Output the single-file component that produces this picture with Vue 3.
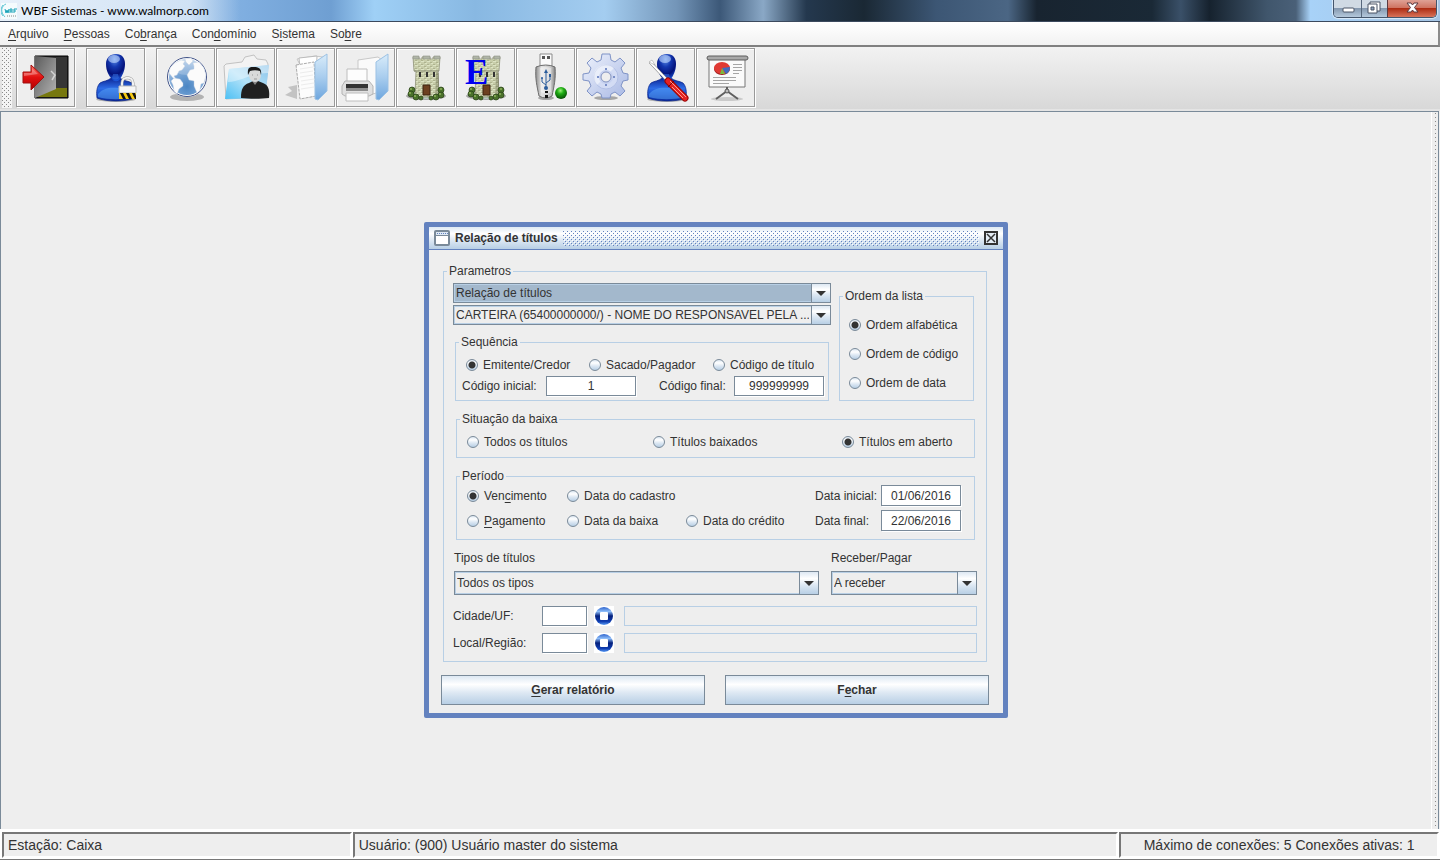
<script setup>
	import { ref } from "vue";

	const menus = [
		["", "A", "rquivo"],
		["", "P", "essoas"],
		["Co", "b", "rança"],
		["Con", "d", "omínio"],
		["S", "i", "stema"],
		["So", "b", "re"],
	];

	const report = ref("Relação de títulos");
	const wallet = ref("CARTEIRA (65400000000/) - NOME DO RESPONSAVEL PELA ...");
	const titleType = ref("Todos os tipos");
	const direction = ref("A receber");

	const orderOptions = ["Ordem alfabética", "Ordem de código", "Ordem de data"];
	const sequenceOptions = [
		"Emitente/Credor",
		"Sacado/Pagador",
		"Código de título",
	];
	const statusOptions = [
		"Todos os títulos",
		"Títulos baixados",
		"Títulos em aberto",
	];

	const order = ref("Ordem alfabética");
	const sequence = ref("Emitente/Credor");
	const status = ref("Títulos em aberto");
	const period = ref("vencimento");

	const firstCode = ref("1");
	const lastCode = ref("999999999");
	const startDate = ref("01/06/2016");
	const endDate = ref("22/06/2016");

	const lookups = ref([
		{ id: "cidade", label: "Cidade/UF:", code: "", name: "" },
		{ id: "local", label: "Local/Região:", code: "", name: "" },
	]);
</script>

<template>
	<div class="app-window">
		<svg class="defs" width="0" height="0" aria-hidden="true">
			<defs>
				<radialGradient id="blueHead" cx="0.45" cy="0.2" r="0.8">
					<stop offset="0" stop-color="#5f8fe8" />
					<stop offset="0.35" stop-color="#1438b0" />
					<stop offset="0.7" stop-color="#04127a" />
					<stop offset="1" stop-color="#1d5be0" />
				</radialGradient>
				<linearGradient id="blueBody" x1="0" y1="0" x2="0" y2="1">
					<stop offset="0" stop-color="#0b2596" />
					<stop offset="0.45" stop-color="#2d6ce6" />
					<stop offset="0.7" stop-color="#1c50cc" />
					<stop offset="1" stop-color="#0a2a9a" />
				</linearGradient>
				<linearGradient id="cover" x1="0" y1="0" x2="0" y2="1">
					<stop offset="0" stop-color="#d9ecfa" />
					<stop offset="0.5" stop-color="#a9cdee" />
					<stop offset="1" stop-color="#6ea6de" />
				</linearGradient>
				<linearGradient id="leaf" x1="0" y1="0" x2="1" y2="1">
					<stop offset="0" stop-color="#5c5c5c" />
					<stop offset="1" stop-color="#b4b4b4" />
				</linearGradient>
				<linearGradient id="redArrow" x1="0" y1="0" x2="0" y2="1">
					<stop offset="0" stop-color="#ff6a5c" />
					<stop offset="0.5" stop-color="#e01010" />
					<stop offset="1" stop-color="#b00000" />
				</linearGradient>
				<radialGradient id="sea" cx="0.5" cy="0.75" r="0.8">
					<stop offset="0" stop-color="#4a86c4" />
					<stop offset="0.6" stop-color="#86aeda" />
					<stop offset="1" stop-color="#c4d8ee" />
				</radialGradient>
				<linearGradient id="photoFolder" x1="0" y1="1" x2="1" y2="0">
					<stop offset="0" stop-color="#4cc0f4" />
					<stop offset="0.5" stop-color="#b4e2f8" />
					<stop offset="1" stop-color="#8cc4ea" />
				</linearGradient>
				<linearGradient id="metal" x1="0" y1="0" x2="1" y2="0">
					<stop offset="0" stop-color="#8e8e8e" />
					<stop offset="0.3" stop-color="#e4e4e4" />
					<stop offset="0.8" stop-color="#c4c4c4" />
					<stop offset="1" stop-color="#808080" />
				</linearGradient>
				<radialGradient id="greenBall" cx="0.45" cy="0.3" r="0.7">
					<stop offset="0" stop-color="#9cf078" />
					<stop offset="0.4" stop-color="#1fae14" />
					<stop offset="1" stop-color="#064c04" />
				</radialGradient>
				<linearGradient id="gearFill" x1="0" y1="0" x2="1" y2="1">
					<stop offset="0" stop-color="#eef2fc" />
					<stop offset="1" stop-color="#a8b8e4" />
				</linearGradient>
				<linearGradient id="lookupBall" x1="0" y1="0" x2="0" y2="1">
					<stop offset="0" stop-color="#2c62cc" />
					<stop offset="0.25" stop-color="#8cbcf8" />
					<stop offset="0.5" stop-color="#04207c" />
					<stop offset="0.8" stop-color="#0e3cb0" />
					<stop offset="1" stop-color="#5a9cf4" />
				</linearGradient>
				<pattern id="stone" width="6" height="4" patternUnits="userSpaceOnUse">
					<rect width="6" height="4" fill="#c8cdaa" />
					<path d="M0 .5h3M4 2.5h2" stroke="#dde4c4" />
					<path d="M3 1.5h2M0 3.5h2" stroke="#aeb38f" />
				</pattern>
				<symbol id="user" viewBox="0 0 57 57">
					<ellipse cx="30" cy="50" rx="20" ry="3" fill="#000" opacity=".25" />
					<path
						d="M11 49c-1-6 0-12 3-15 3-2 8-2 11-5h9c3 3 9 3 12 5 3 3 4 9 3 15-9 4-29 4-38 0z"
						fill="url(#blueBody)"
						stroke="#0a2488"
						stroke-width=".7"
					/>
					<path
						d="M12 45c5-6 12-7 20-6s10 2 16 5v4c-11 3-26 3-36 0z"
						fill="#55a0f4"
						opacity=".55"
					/>
					<path
						d="M30 5c6 0 9 4 9 10 0 7-3 12-5 15-2 3-6 3-8 0-3-3-6-8-6-15 0-6 4-10 10-10z"
						fill="url(#blueHead)"
					/>
					<path
						d="M26 29c2 2 5 2 7 0l-1-4h-5z"
						fill="#3b7cf0"
						opacity=".5"
					/>
					<ellipse cx="28" cy="10" rx="6" ry="4" fill="#c4dcff" opacity=".6" />
				</symbol>
				<symbol id="castle" viewBox="0 0 57 57">
					<ellipse cx="29" cy="47" rx="20" ry="4" fill="#000" opacity=".3" />
					<ellipse cx="29" cy="46" rx="14" ry="4" fill="#b9c9c2" />
					<path
						d="M16 8h6v2h3V8h8v2h3V8h7l-1 14h-1l1 24-6 2H22l-4-2 1-24h-2z"
						fill="url(#stone)"
						stroke="#8f9279"
						stroke-width=".8"
					/>
					<path
						d="M16 7h6v3h-6zM26 7h7v3h-7zM37 7h6v3h-6z"
						fill="#b0b5a8"
						stroke="#8d9185"
						stroke-width=".6"
					/>
					<path d="M17 22h25" stroke="#8c9078" />
					<path d="M39 23l3 1v21l-4 2z" fill="#55583c" opacity=".3" />
					<path d="M22 23h2v5h-2zM29 23h2v5h-2zM36 23h2v5h-2z" fill="#333" />
					<path d="M26 46V36h7v10z" fill="#6d4020" stroke="#3c2410" />
					<g fill="#4b722b" stroke="#263f14" stroke-width=".7">
						<circle cx="15" cy="41" r="3" />
						<circle cx="14" cy="45" r="3" />
						<circle cx="19" cy="48" r="3" />
						<circle cx="24" cy="49" r="2" />
						<circle cx="44" cy="41" r="3" />
						<circle cx="44" cy="46" r="3" />
						<circle cx="39" cy="48" r="3" />
						<circle cx="34" cy="49" r="2" />
					</g>
					<g fill="#8fb55c">
						<circle cx="14" cy="40" r="1" />
						<circle cx="13" cy="44" r="1" />
						<circle cx="18" cy="47" r="1" />
						<circle cx="44" cy="40" r="1" />
						<circle cx="43" cy="45" r="1" />
						<circle cx="38" cy="47" r="1" />
					</g>
				</symbol>
			</defs>
		</svg>

		<header class="titlebar">
			<svg class="app-icon" viewBox="0 0 16 16" aria-hidden="true">
				<rect width="16" height="16" fill="#f4fbfd" />
				<path
					d="M5 1C0 3-1 9 4 14M2 2C-1 6 0 11 2 13"
					fill="none"
					stroke="#5fc6d4"
				/>
				<path
					d="M4 6l1 4 1-3 1 3 1-4M9 10V6h2v2H9M11 8v2M13 10V6h3M13 8h2"
					fill="none"
					stroke="#17a2b8"
				/>
				<path d="M6 13h9" stroke="#888" stroke-dasharray="1 1" />
			</svg>
			<h1>WBF Sistemas - www.walmorp.com</h1>
			<div class="window-controls">
				<button class="control-min" type="button" aria-label="Minimizar">
					<svg viewBox="0 0 28 17">
						<rect
							x="9"
							y="8"
							width="11"
							height="4"
							rx="1"
							fill="#fff"
							stroke="#4b5566"
						/>
					</svg>
				</button>
				<button class="control-restore" type="button" aria-label="Restaurar">
					<svg viewBox="0 0 26 17">
						<path d="M8 2h10v9H8z" fill="#fff" stroke="#4b5566" />
						<path d="M6 4h9v9H6z" fill="#fff" stroke="#4b5566" />
						<path d="M9 7h3v3H9z" fill="#8ea2ba" stroke="#4b5566" />
					</svg>
				</button>
				<button class="control-close" type="button" aria-label="Fechar janela">
					<svg viewBox="0 0 47 17">
						<path
							d="M19 3h4l1.500 2L26 3h4l-3.500 4.500L30 12h-4l-1.500-2L23 12h-4l3.500-4.500z"
							fill="#fff"
							stroke="#5c3a40"
						/>
					</svg>
				</button>
			</div>
		</header>

		<nav class="menubar">
			<button v-for="menu in menus" :key="menu.join('')" type="button">
				{{ menu[0] }}<u>{{ menu[1] }}</u
				>{{ menu[2] }}
			</button>
		</nav>

		<div class="toolbar">
			<span class="grip"></span>
			<button class="tool spaced" type="button" aria-label="Sair">
				<svg viewBox="0 0 57 57">
					<path d="M18 7h33v42H18z" fill="#292929" stroke="#000" />
					<path d="M19 48l20-9h11v9z" fill="#77780f" />
					<path d="M39 8h11v31H39z" fill="#363636" />
					<path d="M18 7l21 2v31l-21 9z" fill="url(#leaf)" />
					<path
						d="M34 22l4 4-3 5"
						fill="none"
						stroke="#d4d4d4"
						stroke-width="1.500"
					/>
					<path
						d="M6 23h8v-7l13 12-13 13v-7H6z"
						fill="url(#redArrow)"
						stroke="#a01010"
					/>
					<path d="M7 24h8v-5l6 6-14 2z" fill="#fff" opacity=".3" />
				</svg>
			</button>
			<button class="tool spaced" type="button" aria-label="Bloquear usuário">
				<svg viewBox="0 0 57 57">
					<use href="#user" x="-1" />
					<path
						d="M35 38v-4c0-7 11-7 11 0v4"
						fill="none"
						stroke="#999"
						stroke-width="3"
					/>
					<path
						d="M35 38v-4c0-7 11-7 11 0v4"
						fill="none"
						stroke="#f2f2f2"
						stroke-width="2"
					/>
					<path d="M32 37h17v7H32z" fill="#f6f6f6" stroke="#bbb" />
					<path d="M32 44h17v6H32z" fill="#f6c915" />
					<path
						d="M33 44h3l3 6h-3zM39 44h3l3 6h-3zM45 44h3l1 3v3h-1z"
						fill="#111"
					/>
				</svg>
			</button>
			<button class="tool" type="button" aria-label="Internet">
				<svg viewBox="0 0 57 57">
					<ellipse cx="30" cy="48" rx="17" ry="4" fill="#000" opacity=".25" />
					<circle
						cx="30"
						cy="28"
						r="19"
						fill="url(#sea)"
						stroke="#fff"
						stroke-width="2"
					/>
					<circle cx="30" cy="28" r="19.500" fill="none" stroke="#3f5186" />
					<g fill="#fbfbfb" stroke="#b8c8dc" stroke-width=".4">
						<path
							d="M13 19l5-5 6-3 4 1-2 3 2 2-3 4-3 1-2 4-3 1 2 3-3-1-4-5z"
						/>
						<path d="M17 29l6 1 3 4 0 3-4 3-2 5-3-3-1-6-2-4z" />
						<path d="M28 10l6-1 2 3-4 4-3-3z" />
						<path
							d="M36 14l6-1 5 6 2 7-2 8-3 1-1 6-3 3-3-7 0-5-5-1-2-5 3-5 4-1 0-3z"
						/>
					</g>
					<ellipse cx="30" cy="18" rx="14" ry="8" fill="#fff" opacity=".2" />
				</svg>
			</button>
			<button class="tool" type="button" aria-label="Cadastro de pessoas">
				<svg viewBox="0 0 57 57">
					<path
						d="M7 17l2-2 16-2 3-5 9-2 3 4 9 1 2 4-3 33-39 2z"
						fill="#f3f3f3"
						stroke="#c2c2c2"
					/>
					<path d="M12 20l40-4-4 33-40 1z" fill="url(#photoFolder)" />
					<path d="M12 20l40-4-1 8c-17 0-26 8-40 9z" fill="#fff" opacity=".4" />
					<path
						d="M24 49c0-9 2-13 8-15l4-2h5l5 2c5 2 7 6 6 15-8 1-20 1-28 0z"
						fill="#202020"
					/>
					<path d="M35 32l3 4 3-4z" fill="#888" />
					<ellipse cx="38" cy="26" rx="6" ry="7" fill="#d9d9d9" />
					<path
						d="M31 26c-1-9 3-8 6-8 5 0 8 2 7 8l-1-4c-3-1-7-1-10 0z"
						fill="#191919"
					/>
					<path d="M35 26h1M40 26h1M37 30h3" stroke="#999" />
				</svg>
			</button>
			<button class="tool" type="button" aria-label="Documentos">
				<svg viewBox="0 0 57 57">
					<path d="M20 50L8 46l7-4-4-4 9-2z" fill="#8d8d8d" opacity=".45" />
					<path d="M20 10l18-3 8 1v34l-7 4z" fill="#f8f8f8" stroke="#c8c8c8" />
					<path d="M22 9l18-2-2 40-12 2z" fill="#fff" stroke="#bbb" />
					<path
						d="M19 16l18-3 2 34-16 3z"
						fill="#fcfcfc"
						stroke="#ababab"
						stroke-dasharray="3 1"
					/>
					<path
						d="M23 20l13-2M23 24l13-2M23 28l13-2M24 32l13-2M24 36l13-2M24 40l13-2"
						stroke="#ececec"
					/>
					<path d="M38 13l12-8v37l-9 9-3-1z" fill="url(#cover)" stroke="#9bc1e4" />
				</svg>
			</button>
			<button class="tool" type="button" aria-label="Imprimir">
				<svg viewBox="0 0 57 57">
					<path d="M21 11l20-3 4 3v31l-15 5-9-3z" fill="#fafafa" stroke="#c8c8c8" />
					<path d="M39 13l12-8v37l-9 9-3-1z" fill="url(#cover)" stroke="#9bc1e4" />
					<path d="M10 20h20v13H10z" fill="#fdfdfd" stroke="#bebebe" />
					<path
						d="M8 32h24l4 5v8l-4 2H8l-3-2v-8z"
						fill="#e0e0e0"
						stroke="#b4b4b4"
					/>
					<path d="M9 35h22v7H9z" fill="#333" />
					<path d="M9 39h22v3H9z" fill="#8d8d8d" />
					<path d="M9 44h22v8H9z" fill="#fdfdfd" stroke="#bebebe" />
				</svg>
			</button>
			<button class="tool" type="button" aria-label="Condomínio">
				<svg viewBox="0 0 57 57"><use href="#castle" /></svg>
			</button>
			<button class="tool" type="button" aria-label="Empresa">
				<svg viewBox="0 0 57 57">
					<use href="#castle" />
					<text class="tool-letter" x="8" y="35">E</text>
				</svg>
			</button>
			<button class="tool" type="button" aria-label="Dispositivo USB">
				<svg viewBox="0 0 57 57">
					<ellipse cx="29" cy="49" rx="8" ry="2" fill="#000" opacity=".3" />
					<path d="M23 5h12v12H23z" fill="#fafafa" stroke="#8b8b8b" />
					<path d="M25 7h3v3h-3zM30 7h3v3h-3z" fill="#555" />
					<path
						d="M19 18q10-4 19 0c1 12-1 19-3 29q-6 4-13 0c-2-10-4-17-3-29z"
						fill="url(#metal)"
						stroke="#6d6d6d"
					/>
					<path d="M23 19q5-2 11 0v24q-5 3-10 0z" fill="#fff" opacity=".4" />
					<path
						d="M29 40V23M29 36l-4-3v-4M29 34l4-3v-4"
						fill="none"
						stroke="#2b5d9c"
					/>
					<path d="M29 20l2 4h-4zM32 25h2v3h-2z" fill="#2b5d9c" />
					<circle cx="25" cy="29" r="1" fill="#2b5d9c" />
					<circle cx="29" cy="39" r="2" fill="#2b5d9c" />
					<path d="M28 42h3v2h-3zM28 46h3v3h-3z" fill="#111" />
					<circle cx="44" cy="44" r="6" fill="url(#greenBall)" />
				</svg>
			</button>
			<button class="tool" type="button" aria-label="Configurações">
				<svg viewBox="0 0 57 57">
					<ellipse cx="29" cy="49" rx="12" ry="2" fill="#000" opacity=".3" />
					<path
						d="M25 5h8l1 6 4 2 5-4 5 5-4 5 2 5 5 1v6l-5 1-2 5 4 5-5 5-5-4-4 2-1 4h-8l-1-4-4-2-5 4-5-5 4-5-2-5-6-1v-6l6-1 2-5-4-5 5-5 5 4 4-2z"
						fill="url(#gearFill)"
						stroke="#7f93c6"
					/>
					<circle cx="29" cy="28" r="12" fill="#d3dcf4" stroke="#b2c0e6" />
					<path d="M20 36A12 12 0 0 1 37 19z" fill="#fff" opacity=".5" />
					<circle cx="29" cy="28" r="7" fill="#c6d1f0" />
					<circle cx="29" cy="28" r="5" fill="#eee" stroke="#8494bf" />
					<path
						d="M28 19h2v2h-2zM28 35h2v2h-2zM20 27h2v2h-2zM36 27h2v2h-2z"
						fill="#7b90c8"
					/>
				</svg>
			</button>
			<button class="tool" type="button" aria-label="Ferramentas do usuário">
				<svg viewBox="0 0 57 57">
					<use href="#user" />
					<path d="M13 13l17 18" stroke="#777" stroke-width="3" />
					<path d="M13 13l17 18" stroke="#fff" stroke-width="2" />
					<path d="M12 13l3-2 3 5z" fill="#fff" stroke="#999" stroke-width=".5" />
					<path
						d="M31 32l17 17"
						stroke="#9c0606"
						stroke-width="7"
						stroke-linecap="round"
					/>
					<path
						d="M31 32l17 17"
						stroke="#e62222"
						stroke-width="5"
						stroke-linecap="round"
					/>
					<path d="M33 32l16 16M35 38l11 11" stroke="#ff9a90" />
					<path d="M31 38l6-6" stroke="#7c0000" />
				</svg>
			</button>
			<button class="tool" type="button" aria-label="Relatórios">
				<svg viewBox="0 0 57 57">
					<ellipse cx="30" cy="50" rx="16" ry="2" fill="#000" opacity=".15" />
					<path d="M12 10h36v28H12z" fill="#fafafa" stroke="#777" />
					<rect
						x="10"
						y="7"
						width="41"
						height="4"
						rx="2"
						fill="#a8a8a8"
						stroke="#5c5c5c"
					/>
					<ellipse cx="25" cy="20" rx="8" ry="6" fill="#9c1c1c" />
					<ellipse cx="25" cy="19" rx="8" ry="6" fill="#e03a34" />
					<path d="M25 19l8-1c0 4-2 6-4 7z" fill="#3e6cc0" />
					<path d="M25 19l3 6-5 0z" fill="#7cb83c" />
					<path
						d="M36 15.500h9M36 18.500h9M36 21.500h9M36 24.500h6M16 28.500h23M16 31.500h23M16 34.500h16"
						stroke="#a5a5a5"
					/>
					<path
						d="M30 38v5M30 42L19 50M30 42l11 8"
						fill="none"
						stroke="#5f5f5f"
						stroke-width="2"
					/>
					<circle cx="30" cy="42" r="2" fill="#bbb" stroke="#555" />
				</svg>
			</button>
		</div>

		<main class="desktop">
			<span class="side-grip"></span>

			<section class="dialog" aria-labelledby="dialog-title">
				<header class="dialog-title">
					<svg viewBox="0 0 16 16" aria-hidden="true">
						<rect
							x="1"
							y="1"
							width="14"
							height="14"
							rx="1"
							fill="#fff"
							stroke="#7a8a99"
							stroke-width="2"
						/>
						<path d="M2 2h12v3H2z" fill="#dde8f3" />
						<path d="M3 3.500h11" stroke="#6382bf" stroke-dasharray="1 1" />
						<path d="M2 5.500h12" stroke="#7a8a99" />
					</svg>
					<h2 id="dialog-title">Relação de títulos</h2>
					<span class="bumps"></span>
					<button type="button" aria-label="Fechar diálogo">
						<svg viewBox="0 0 14 14">
							<rect
								x="1"
								y="1"
								width="12"
								height="12"
								fill="#e4edf6"
								stroke="#333"
								stroke-width="2"
							/>
							<path
								d="M3 3l8 8M11 3l-8 8"
								stroke="#333"
								stroke-width="1.500"
							/>
						</svg>
					</button>
				</header>

				<form class="dialog-body" @submit.prevent>
					<fieldset class="params">
						<legend>Parametros</legend>
						<div class="params-inner">
							<div class="top">
								<div class="top-left">
									<div class="combo focused">
										<select v-model="report" aria-label="Relatório">
											<option>Relação de títulos</option>
										</select>
										<span class="arrow"></span>
									</div>
									<div class="combo">
										<select v-model="wallet" aria-label="Carteira">
											<option>{{ wallet }}</option>
										</select>
										<span class="arrow"></span>
									</div>
									<fieldset class="sequence">
										<legend>Sequência</legend>
										<div class="sequence-radios">
											<label
												v-for="option in sequenceOptions"
												:key="option"
												class="radio"
											>
												<input
													v-model="sequence"
													type="radio"
													name="sequence"
													:value="option"
												/>
												{{ option }}
											</label>
										</div>
										<div class="codes">
											<label for="first-code">Código inicial:</label>
											<input id="first-code" v-model="firstCode" type="text" />
											<label for="last-code">Código final:</label>
											<input id="last-code" v-model="lastCode" type="text" />
										</div>
									</fieldset>
								</div>
								<fieldset class="order">
									<legend>Ordem da lista</legend>
									<div class="order-radios">
										<label
											v-for="option in orderOptions"
											:key="option"
											class="radio"
										>
											<input
												v-model="order"
												type="radio"
												name="order"
												:value="option"
											/>
											{{ option }}
										</label>
									</div>
								</fieldset>
							</div>

							<fieldset class="wide">
								<legend>Situação da baixa</legend>
								<div class="status-radios">
									<label
										v-for="option in statusOptions"
										:key="option"
										class="radio"
									>
										<input
											v-model="status"
											type="radio"
											name="status"
											:value="option"
										/>
										{{ option }}
									</label>
								</div>
							</fieldset>

							<fieldset class="wide">
								<legend>Período</legend>
								<div class="period">
									<label class="radio">
										<input
											v-model="period"
											type="radio"
											name="period"
											value="vencimento"
										/>
										<span>Ven<u>c</u>imento</span>
									</label>
									<label class="radio to-dates">
										<input
											v-model="period"
											type="radio"
											name="period"
											value="cadastro"
										/>
										Data do cadastro
									</label>
									<label for="start-date">Data inicial:</label>
									<input id="start-date" v-model="startDate" type="text" />
									<label class="radio">
										<input
											v-model="period"
											type="radio"
											name="period"
											value="pagamento"
										/>
										<span><u>P</u>agamento</span>
									</label>
									<label class="radio">
										<input
											v-model="period"
											type="radio"
											name="period"
											value="baixa"
										/>
										Data da baixa
									</label>
									<label class="radio">
										<input
											v-model="period"
											type="radio"
											name="period"
											value="credito"
										/>
										Data do crédito
									</label>
									<label for="end-date">Data final:</label>
									<input id="end-date" v-model="endDate" type="text" />
								</div>
							</fieldset>

							<div class="types">
								<div class="type-field">
									<label for="title-type">Tipos de títulos</label>
									<div class="combo tall">
										<select id="title-type" v-model="titleType">
											<option>Todos os tipos</option>
										</select>
										<span class="arrow"></span>
									</div>
								</div>
								<div class="direction-field">
									<label for="direction">Receber/Pagar</label>
									<div class="combo tall">
										<select id="direction" v-model="direction">
											<option>A receber</option>
										</select>
										<span class="arrow"></span>
									</div>
								</div>
							</div>

							<div class="lookups">
								<div v-for="row in lookups" :key="row.id" class="lookup">
									<label :for="row.id">{{ row.label }}</label>
									<input :id="row.id" v-model="row.code" type="text" />
									<button type="button" :aria-label="'Buscar ' + row.label">
										<svg viewBox="0 0 20 20">
											<circle cx="10" cy="10" r="9" fill="url(#lookupBall)" />
											<rect x="6" y="6" width="8" height="8" rx="1" fill="#fff" />
										</svg>
									</button>
									<input
										v-model="row.name"
										class="readonly"
										type="text"
										readonly
										:aria-label="row.label + ' nome'"
									/>
								</div>
							</div>
						</div>
					</fieldset>

					<div class="actions">
						<button type="submit"><u>G</u>erar relatório</button>
						<button type="button">F<u>e</u>char</button>
					</div>
				</form>
			</section>
		</main>

		<footer class="statusbar">
			<span>Estação: Caixa</span>
			<span>Usuário: (900) Usuário master do sistema</span>
			<span class="connections">Máximo de conexões: 5 Conexões ativas: 1</span>
		</footer>
	</div>
</template>

<style>
	body {
		margin: 0;
	}
</style>

<style scoped>
	.app-window,
	.app-window * {
		box-sizing: border-box;
	}
	.app-window {
		display: flex;
		flex-direction: column;
		min-height: 100vh;
		background: #eee;
		color: #333;
		font-family: "Liberation Sans", Arial, sans-serif;
		font-size: 12px;
		line-height: 14px;
	}
	.defs {
		position: absolute;
	}
	button,
	input,
	select {
		margin: 0;
		padding: 0;
		border: none;
		border-radius: 0;
		background: none;
		color: inherit;
		font: inherit;
	}
	svg {
		display: block;
	}
	h1,
	h2 {
		margin: 0;
	}
	u {
		text-underline-offset: 2px;
		text-decoration-thickness: 1px;
		text-decoration-skip-ink: none;
	}

	.titlebar {
		display: flex;
		align-items: center;
		height: 22px;
		padding: 0 3px 0 1px;
		border-bottom: 1px solid #3c4a5e;
		background:
			linear-gradient(
				90deg,
				rgba(240, 246, 252, 0.85) 0,
				rgba(225, 237, 249, 0.8) 190px,
				transparent 240px
			),
			linear-gradient(
				90deg,
				#b4d0ec 0,
				#7faee0 17%,
				#6f9fd2 23%,
				#9fd0f6 26%,
				#88b8e2 33%,
				#a4cdf0 42%,
				#7395b8 47%,
				#3c5878 50%,
				#8aa8c6 53%,
				#24384e 56%,
				#1a2834 60%,
				#3c5674 65%,
				#4b6684 70%,
				#182430 72%,
				#1a2936 80%,
				#3a5068 82%,
				#16222e 84%,
				#40566c 88%,
				#4a6078 90%,
				#a8d2f8 91%,
				#a4c4e4 100%
			);
	}
	.app-icon {
		width: 16px;
		height: 16px;
	}
	.titlebar h1 {
		flex: 1;
		margin-left: 4px;
		color: #000;
		font-family: Lato, "Open Sans", sans-serif;
		font-size: 12px;
		font-weight: 400;
		line-height: 20px;
	}
	.window-controls {
		display: flex;
		align-self: flex-start;
		overflow: hidden;
		border: 1px solid #45566c;
		border-top: none;
		border-radius: 0 0 5px 5px;
		box-shadow: 0 0 1px 1px rgba(255, 255, 255, 0.6);
	}
	.window-controls button {
		height: 17px;
		background: linear-gradient(#d0dae4 0 45%, #8599b0 50%, #b4c8dc);
	}
	.window-controls .control-min {
		width: 28px;
		border-right: 1px solid #56677c;
	}
	.window-controls .control-restore {
		width: 26px;
		border-right: 1px solid #5c3a40;
	}
	.window-controls .control-close {
		width: 48px;
		background: linear-gradient(#dfa195 0, #cf7462 45%, #ae2d14 50%, #d8735a);
	}
	.window-controls svg {
		height: 17px;
	}

	.menubar {
		display: flex;
		gap: 1px;
		height: 25px;
		padding: 0 1px;
		border-right: 2px solid #8c8c8c;
		border-bottom: 2px solid #808080;
		background: linear-gradient(#fff, #f2f2f2);
	}
	.menubar button {
		padding: 1px 7px 0;
	}

	.toolbar {
		display: flex;
		align-items: flex-start;
		gap: 1px;
		height: 64px;
		padding: 1px 2px;
		border-bottom: 2px solid #e4e4e4;
		background: linear-gradient(#f2f2f2, #d8d8d8);
	}
	.grip {
		width: 10px;
		height: 60px;
		margin-right: 3px;
		background:
			conic-gradient(from 270deg at 1px 1px, #8b8b8b 90deg, transparent 0) 0 0 /
				4px 4px,
			conic-gradient(from 270deg at 1px 1px, #8b8b8b 90deg, transparent 0) 2px
				2px / 4px 4px,
			#f4f4f4;
	}
	.tool {
		width: 59px;
		height: 59px;
		border: 1px solid #999;
		background: #eee;
		box-shadow:
			inset 1px 1px #fff,
			1px 1px #fff;
	}
	.tool.spaced {
		margin-right: 10px;
	}
	.tool svg {
		width: 57px;
		height: 57px;
	}
	.tool-letter {
		fill: #0000f0;
		font-family: "Liberation Serif", serif;
		font-size: 35px;
		font-weight: 700;
	}

	.desktop {
		position: relative;
		display: flex;
		flex: 1;
		justify-content: flex-end;
		min-height: 620px;
		margin-right: 1px;
		border: 1px solid #7a8a99;
		border-bottom: none;
		background: #eee;
	}
	.side-grip {
		width: 7px;
		border-left: 1px solid #fff;
		background: conic-gradient(
				from 270deg at 1px 1px,
				#8b8b8b 90deg,
				transparent 0
			)
			3px 1px / 8px 4px;
	}

	.dialog {
		position: absolute;
		top: 110px;
		left: 423px;
		width: 584px;
		border: 5px solid #6382bf;
		border-radius: 2px;
		background: #eee;
	}
	.dialog-title {
		display: flex;
		align-items: center;
		gap: 5px;
		height: 23px;
		padding: 0 5px;
		border-bottom: 1px solid #6382bf;
		background: linear-gradient(#dde8f3, #fff 30%, #dde8f3 60%, #b8cfe5);
	}
	.dialog-title svg {
		width: 16px;
		height: 16px;
	}
	.dialog-title h2 {
		font-size: 12px;
		font-weight: 700;
	}
	.bumps {
		flex: 1;
		height: 15px;
		background:
			conic-gradient(from 270deg at 1px 1px, #6382bf 90deg, transparent 0) 0 0 /
				4px 4px,
			conic-gradient(from 270deg at 1px 1px, #6382bf 90deg, transparent 0) 2px
				2px / 4px 4px,
			conic-gradient(from 270deg at 1px 1px, #fff 90deg, transparent 0) 1px 1px /
				4px 4px,
			conic-gradient(from 270deg at 1px 1px, #fff 90deg, transparent 0) 3px 3px /
				4px 4px;
	}
	.dialog-title button svg {
		width: 14px;
		height: 14px;
	}
	.dialog-body {
		padding: 14px 14px 8px 12px;
	}

	fieldset {
		min-width: 0;
		margin: 0;
		padding: 0;
		border: 1px solid #b8cfe5;
	}
	legend {
		margin-left: 3px;
		padding: 0 2px;
	}
	.params {
		margin: 0 2px;
	}
	.params-inner {
		padding: 5px 9px 8px;
	}
	.top {
		display: flex;
		gap: 8px;
		padding-right: 3px;
	}
	.top-left {
		display: flex;
		flex: 1;
		flex-direction: column;
		gap: 2px;
	}
	.order {
		flex: 0 0 135px;
		align-self: flex-end;
	}
	.order-radios {
		display: flex;
		flex-direction: column;
		gap: 15px;
		padding: 15px 9px 10px;
	}
	.sequence {
		margin: 8px 2px 0;
	}
	.sequence-radios {
		display: grid;
		grid-template-columns: 123px 124px 1fr;
		padding: 9px 0 4px 10px;
	}
	.codes {
		display: grid;
		grid-template-columns: 84px 113px 75px 90px;
		align-items: center;
		height: 24px;
		padding: 0 0 4px 6px;
	}
	.wide {
		margin: 11px 2px 0 3px;
	}
	.status-radios {
		display: grid;
		grid-template-columns: 186px 189px 1fr;
		padding: 9px 10px 8px;
	}
	.period {
		display: grid;
		grid-template-columns: 100px 119px 129px 66px 80px;
		row-gap: 4px;
		align-items: center;
		padding: 2px 0 8px 10px;
	}
	.period .to-dates {
		grid-column: span 2;
	}
	.period input[type="text"] {
		height: 21px;
	}

	.radio {
		display: flex;
		align-items: center;
		gap: 5px;
		white-space: nowrap;
	}
	.radio input {
		flex: none;
		width: 12px;
		height: 12px;
		border: 1px solid #7a8a99;
		border-radius: 50%;
		appearance: none;
		background: linear-gradient(#dde8f3, #fff 30%, #dde8f3 60%, #b8cfe5);
	}
	.radio input:checked {
		background:
			radial-gradient(circle, #333 3px, transparent 4px),
			linear-gradient(#dde8f3, #fff 30%, #dde8f3 60%, #b8cfe5);
	}
	input[type="text"] {
		width: 100%;
		height: 20px;
		border: 1px solid #7a8a99;
		background: #fff;
		box-shadow: 1px 1px #fff;
		text-align: center;
	}
	.codes input[type="text"] {
		width: 90px;
	}

	.combo {
		position: relative;
		height: 20px;
		border: 1px solid #7a8a99;
	}
	.combo select {
		display: block;
		width: 100%;
		height: 100%;
		padding: 0 20px 0 1px;
		border: 1px solid #b8cfe5;
		appearance: none;
		background: #eee;
	}
	.combo.focused select {
		background: #a3b8cc;
	}
	.combo.tall {
		height: 24px;
	}
	.arrow {
		position: absolute;
		top: 0;
		right: 0;
		bottom: 0;
		display: flex;
		align-items: center;
		justify-content: center;
		width: 19px;
		border-left: 1px solid #7a8a99;
		background: linear-gradient(#dde8f3, #fff 30%, #dde8f3 60%, #b8cfe5);
		pointer-events: none;
	}
	.arrow::after {
		content: "";
		border: 5px solid transparent;
		border-top-color: #333;
		border-bottom: none;
	}

	.types {
		display: flex;
		gap: 12px;
		margin: 11px 0 0 1px;
	}
	.types label {
		display: block;
		margin-bottom: 6px;
	}
	.type-field {
		flex: 1;
	}
	.direction-field {
		flex: 0 0 146px;
	}
	.lookups {
		display: flex;
		flex-direction: column;
		gap: 7px;
		margin-top: 11px;
	}
	.lookup {
		display: grid;
		grid-template-columns: 89px 45px 7px 20px 10px 1fr;
		align-items: center;
	}
	.lookup button {
		grid-column: 4;
		width: 20px;
		height: 20px;
		background: #fff;
	}
	.lookup .readonly {
		grid-column: 6;
		border-color: #b8cfe5;
		background: #eee;
		box-shadow: none;
	}

	.actions {
		display: flex;
		gap: 20px;
		margin-top: 13px;
	}
	.actions button {
		flex: 1;
		height: 30px;
		border: 1px solid #7a8a99;
		background: linear-gradient(#dde8f3, #fff 30%, #dde8f3 60%, #b8cfe5);
		font-weight: 700;
	}

	.statusbar {
		display: grid;
		grid-template-columns: 350fr 766fr 320fr;
		gap: 1px;
		padding: 3px 1px 1px 2px;
		border-bottom: 1px solid #777;
		background: #fff;
		font-size: 14px;
		line-height: 22px;
	}
	.statusbar span {
		padding: 0 4px;
		border: 2px solid #777;
		border-right-color: #fff;
		border-bottom-color: #fff;
		background: #eee;
		white-space: nowrap;
	}
	.statusbar .connections {
		text-align: center;
	}
</style>
